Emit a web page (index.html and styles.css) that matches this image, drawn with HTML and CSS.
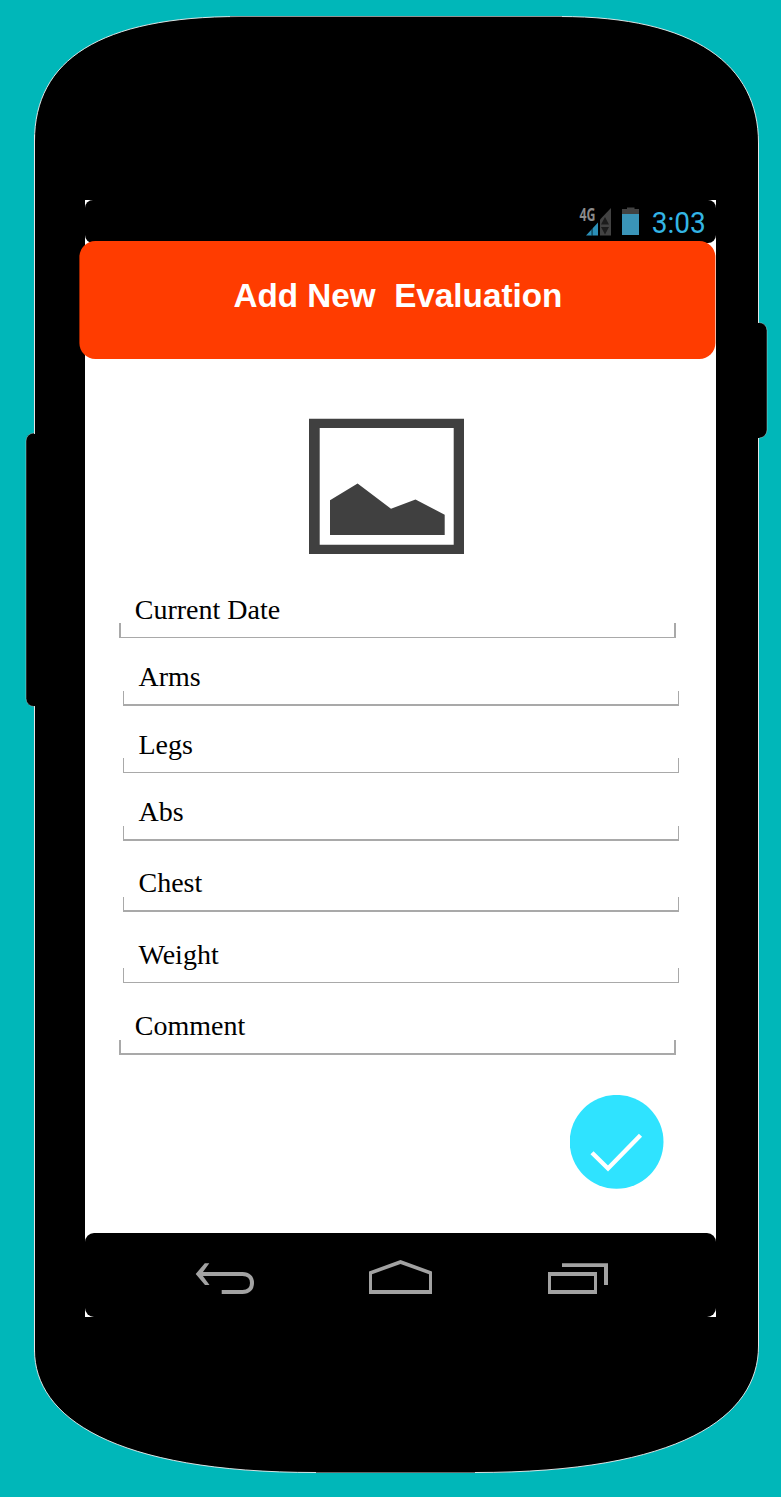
FILE: index.html
```html
<!DOCTYPE html>
<html lang="en">
<head>
<meta charset="utf-8">
<title>Add New Evaluation</title>
<link rel="stylesheet" href="styles.css">
</head>
<body>
<div class="device">
  <svg class="shell" viewBox="0 0 781 1497" aria-hidden="true">
    <rect class="side-key" x="26" y="433" width="24" height="273.5" rx="8"/>
    <rect class="side-key" x="740" y="322.5" width="27" height="115.5" rx="8"/>
    <path class="casing" d="M34.5 141C34.5 60 100 16.5 240 16.5H560C695 16.5 758.5 65 758.5 143V1346C758.5 1417 680 1472.5 475 1472.5H316C113 1472.5 34.5 1417 34.5 1350Z"/>
    <path class="edge-light" d="M34.5 135V433M34.5 707V1352M758.5 143V322M758.5 438V1346"/>
    <path class="edge-top" d="M230 16.5H562"/>
    <path class="edge-bottom" d="M316 1472.5H475"/>
    <path class="key-joint" d="M34.5 434V706M758.5 323V438"/>
  </svg>
  <main class="screen">
    <div class="status">
      <svg class="signal" width="34" height="30" viewBox="0 0 34 30">
        <text class="network" x="1.5" y="14.5" textLength="16" lengthAdjust="spacingAndGlyphs">4G</text>
        <path fill="#2b8fb7" d="M8 29.5L13.500 23.5V29.5ZM14.700 29.5V22.3L20 16.500V29.5Z"/>
        <path fill="#1b6886" d="M13.200 24L14.700 22.3V29.5H13.200Z"/>
        <path fill="#424242" d="M22 13.5L33 2V29.5H22Z"/>
        <path fill="#1c1c1c" d="M23 18.5L27 11L31 18.5ZM23 21H31L27 28.5Z"/>
      </svg>
      <svg class="battery" width="17" height="28" viewBox="0 0 17 28">
        <path fill="#424242" d="M0 2H5V0.500H12.500V2H17V7H0Z"/>
        <path fill="#3a94b8" d="M0 7H17V28H0Z"/>
      </svg>
      <span class="clock">3:03</span>
    </div>
    <header class="title">Add New&nbsp; Evaluation</header>
    <svg class="photo" width="156" height="137" viewBox="309 418 156 137">
      <path fill="#404040" fill-rule="evenodd" d="M309 418.700H464V554H309ZM319.700 428V544.700H453.700V428Z"/>
      <path fill="#404040" d="M330 500.200L357.600 483.400L391 508.800L415.500 499.400L444.700 514.800V535H330Z"/>
    </svg>
    <div class="fields">
      <div class="field wide thin">Current Date</div>
      <div class="field">Arms</div>
      <div class="field thin">Legs</div>
      <div class="field">Abs</div>
      <div class="field">Chest</div>
      <div class="field thin">Weight</div>
      <div class="field wide">Comment</div>
    </div>
    <div class="confirm">
      <svg width="94" height="94" viewBox="570 1095 94 94">
        <circle cx="616.600" cy="1141.800" r="46.900" fill="#2fe3ff"/>
        <path fill="none" stroke="#fff" stroke-width="4.400" d="M592 1152.700L608 1168.500L640.500 1135.300"/>
      </svg>
    </div>
    <nav class="nav">
      <svg width="631" height="84" viewBox="85 1233 631 84">
        <g fill="#a2a2a2">
          <path d="M195.700 1274L204.800 1263.300H209.300L201.500 1274L209.500 1285H205Z"/>
          <path fill="none" stroke="#a2a2a2" stroke-width="4" d="M199 1274H242.500C248.500 1274 252 1277.500 252 1283S248.500 1292 242.500 1292H221.700"/>
          <path fill-rule="evenodd" d="M369 1271.500L400.500 1260L432 1271.500V1294H369ZM372 1274.200V1290H429V1274.200L400.500 1264Z"/>
          <path fill-rule="evenodd" d="M548 1272H597V1294H548ZM551 1276V1290H594V1276Z"/>
          <path d="M562 1263.300H608V1285H604V1267H562Z"/>
        </g>
      </svg>
    </nav>
  </main>
</div>
</body>
</html>
```
FILE: styles.css
```css
* { box-sizing: border-box; }
body {
  margin: 0;
  background: #00b7b9;
}
svg { display: block; }
.device {
  position: relative;
  width: 781px;
  height: 1497px;
  padding: 200px 65px 0 85px;
}
.shell {
  position: absolute;
  inset: 0;
  width: 781px;
  height: 1497px;
}
.side-key { fill: #000; stroke: #d5e5e5; stroke-width: .4; }
.casing { fill: #000; stroke: #f2f2f2; stroke-width: .9; }
.edge-light, .edge-top, .edge-bottom, .key-joint { fill: none; stroke-width: 1; }
.edge-light { stroke: #e4e4e4; }
.edge-top { stroke: #929292; }
.edge-bottom { stroke: #666; }
.key-joint { stroke: #000; stroke-width: 2; }
.screen {
  position: relative;
  display: flex;
  flex-direction: column;
  width: 631px;
  height: 1117px;
  background: #fff;
}
.status {
  display: flex;
  justify-content: flex-end;
  align-items: flex-start;
  flex: none;
  height: 43px;
  padding: 6px 10px 0 0;
  background: #000;
  border-radius: 8px;
}
.signal { margin-right: 10px; overflow: visible; }
.battery { margin: 1px 12px 0 0; }
.network { font: bold 17px "Noto Sans", sans-serif; fill: #8b8b8b; }
.clock {
  width: 55px;
  margin-top: -1px;
  font: 29.5px/36px Roboto, sans-serif;
  color: #33b5e5;
  white-space: nowrap;
  transform: translateX(.8px) scaleX(.95);
  transform-origin: left;
}
.title {
  flex: none;
  width: 636px;
  height: 118px;
  margin: -2px 0 0 -6px;
  padding-left: 1px;
  border-radius: 16px;
  background: #ff3c00;
  color: #fff;
  font: bold 33.250px/109px "Liberation Sans", Arial, sans-serif;
  text-align: center;
  white-space: pre;
  transform: translateX(.4px);
}
.photo { flex: none; margin: 59px 0 0 224px; }
.fields {
  display: grid;
  grid-template-rows: 38px 68px 67px 68px 71px 71px 72px;
  align-items: end;
  margin: 45px 0 0 34px;
}
.field {
  width: 556px;
  height: 38px;
  margin-left: 4px;
  padding-left: 15.500px;
  color: #000;
  font: 28px/18px "Liberation Serif", "Times New Roman", serif;
  background:
    linear-gradient(#a9a9a9, #a9a9a9) left bottom / var(--tick, 1px) 15px no-repeat,
    linear-gradient(#a9a9a9, #a9a9a9) right bottom / var(--tick, 1px) 15px no-repeat,
    linear-gradient(#a9a9a9, #a9a9a9) left bottom / 100% var(--rule, 2px) no-repeat;
}
.wide { --tick: 2px; width: 557px; margin-left: 0; padding-left: 15.800px; }
.thin { --rule: 1px; line-height: 20px; }
.confirm {
  width: 94px;
  height: 94px;
  margin: 40px 0 0 485px;
}
.nav {
  margin-top: auto;
  height: 84px;
  border-radius: 9px;
  background: #000;
}
```
